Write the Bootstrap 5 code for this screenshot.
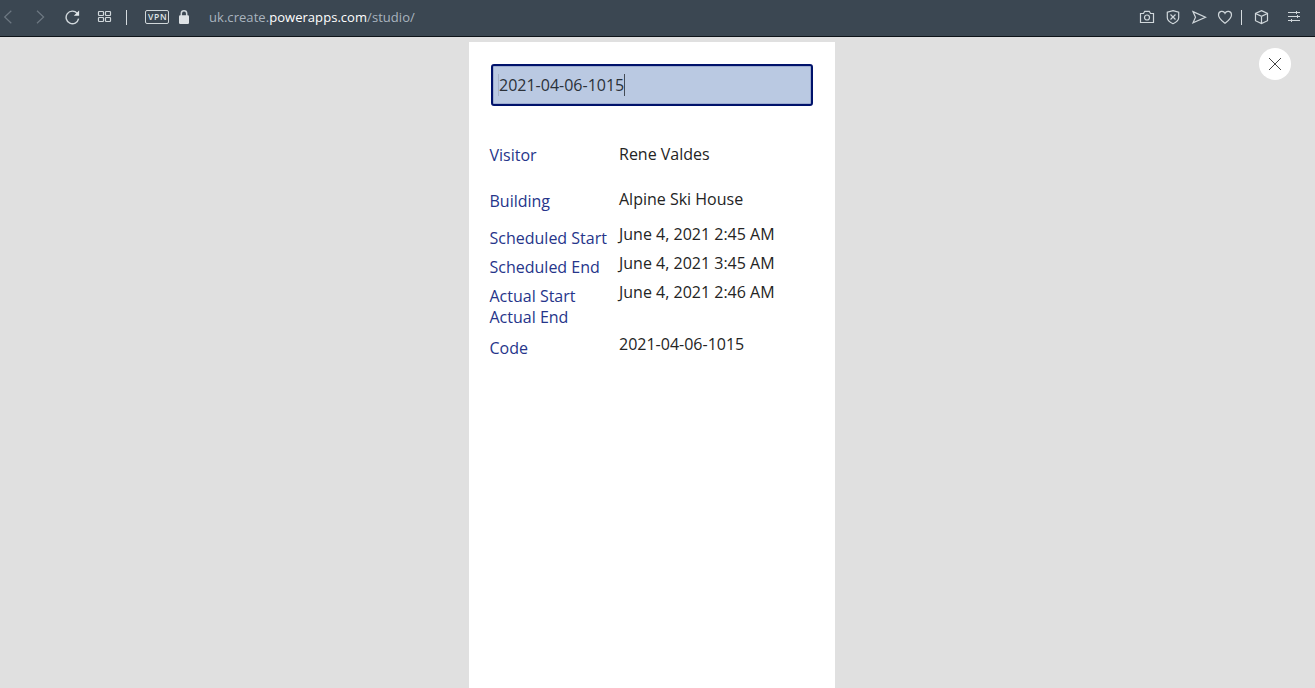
<!DOCTYPE html>
<html lang="en">
<head>
<meta charset="utf-8">
<meta name="viewport" content="width=device-width, initial-scale=1">
<title>Visitor check-in</title>
<link href="https://cdn.jsdelivr.net/npm/bootstrap@5.3.0/dist/css/bootstrap.min.css" rel="stylesheet">
<style>
body{height:100vh;background:#e0e0e0;font-family:"Open Sans","Noto Sans",sans-serif;font-size:16px;line-height:22px;color:#242424}
.browser-bar{height:37px;flex:none;background:#3b4752;border-bottom:1px solid #0e1419;padding-bottom:2px;color:#dfe4e7}
.browser-bar svg{fill:none;stroke:#d0d7db;stroke-width:1.2;flex:none;display:block}
.browser-bar .dim{stroke:#6d7882}
.sep{width:1px;height:15px;background:#d5dbdf}
.sep-nav{margin-left:14px}.sep-tools{margin-left:8px}
.vpn{width:24px;height:14px;border:1px solid #d0d7da;border-radius:2px;font-size:8.5px;line-height:12px;font-weight:600;letter-spacing:.8px;padding-left:2px;margin-left:18px}
.lock{margin-left:9px}
.tool{margin-left:10px}
.cube{margin-left:11px}
.tune{margin-left:17px;margin-right:13px}
.address{font-size:13px;line-height:18px;letter-spacing:.05px;color:#a9b4bf;margin-left:19px;white-space:nowrap}
.address b{font-weight:400;color:#fff}
.stage{padding-top:5px;padding-left:469px}
.phone{width:366px;background:#fff;padding:22px 22px 0}
.scan{width:322px;height:42px;border:2px solid #00126b;border-radius:3px;background:#bac9e2;padding:0 5px;box-shadow:inset 0 0 0 1px #9dacd0;color:#2b3139}
.scan .caret{width:1px;height:22px;background:#444b55}
.scan .edge{width:1px;height:22px;background:#a3b0c8}
.facts{margin:37px -2px 0 -1.5px}
.facts dt{width:129.5px;font-weight:400;color:#26358a;white-space:nowrap}
.facts dd{margin:0;white-space:nowrap}
.r1{height:45px}.r1 dt{padding-top:1px}
.r2{height:35px}.r2 dt{padding-top:2px}
.r3{height:29px}.r3 dt,.r5 dt,.r7 dt{padding-top:4px}
.r5{height:25px}.r6{height:27px}
.close-btn{width:32px;height:32px;background:#fff;margin:6px 24px 0 auto;border:0;padding:0}
</style>
<script src="https://cdn.jsdelivr.net/npm/bootstrap@5.3.0/dist/js/bootstrap.bundle.min.js"></script>
</head>
<body class="d-flex flex-column overflow-hidden">
<header class="browser-bar d-flex align-items-center">
  <svg class="dim" width="16" height="16" viewBox="0 0 16 16"><path d="M11.300 1.800 4.700 8l6.600 6.200"/></svg>
  <svg class="dim ms-3" width="16" height="16" viewBox="0 0 16 16"><path d="M5 1.800 11.600 8 5 14.200"/></svg>
  <svg class="ms-3" width="16" height="16" viewBox="0 0 16 16"><path stroke-width="1.400" d="M13.200 4.300A6.300 6.300 0 1 0 14.600 9.700"/><path d="M15.100 1.500v5.300H9.800z" fill="#e2e7ea" stroke="none"/></svg>
  <svg class="ms-3" width="16" height="16" viewBox="0 0 16 16"><rect x="2.500" y="2.500" width="5" height="4" rx=".7"/><rect x="9.500" y="2.500" width="5" height="4" rx=".7"/><rect x="2.500" y="8.500" width="5" height="4" rx=".7"/><rect x="9.500" y="8.500" width="5" height="4" rx=".7"/></svg>
  <span class="sep sep-nav"></span>
  <span class="vpn">VPN</span>
  <svg class="lock" width="12" height="16" viewBox="0 0 12 16"><path d="M3.300 7V4.400a2.700 2.700 0 0 1 5.400 0V7" stroke-width="1.500"/><rect x="1" y="6.300" width="10" height="8.600" rx="1.200" fill="#dde2e5" stroke="none"/></svg>
  <span class="address">uk.create.<b>powerapps.com</b>/studio/</span>
  <svg class="ms-auto" width="16" height="16" viewBox="0 0 16 16"><path d="M1.500 4.500h3l1.200-2.200h4.600l1.200 2.200h3v9h-13z"/><circle cx="8" cy="8.500" r="2.500"/></svg>
  <svg class="tool" width="16" height="16" viewBox="0 0 16 16"><path d="M8 1.600 13.700 3.300v5.400c0 3-2.500 4.500-5.700 6-3.200-1.500-5.700-3-5.700-6V3.300zM5.500 5.500l5 5M10.500 5.500l-5 5"/></svg>
  <svg class="tool" width="16" height="16" viewBox="0 0 16 16"><path d="M2 2.600 14.500 8.200 2 13.800 4.500 8.200z"/></svg>
  <svg class="tool" width="16" height="16" viewBox="0 0 16 16"><path d="M8 14.300C4.800 11.700 1.500 9.300 1.500 5.900c0-4 5-4.800 6.500-1.600 1.500-3.200 6.500-2.400 6.500 1.600 0 3.400-3.300 5.800-6.500 8.400z"/></svg>
  <span class="sep sep-tools"></span>
  <svg class="cube" width="16" height="16" viewBox="0 0 16 16"><path d="M8.500 1.600 14.500 4.500v7.200L8.500 14.500 2.500 11.700V4.500zM2.500 4.500l6 2.800 6-2.800M8.500 7.300v7.200"/></svg>
  <svg class="tune" width="16" height="16" viewBox="0 0 16 16"><path stroke-width="1" d="M2 3.500h12M2 7.500h12M2 11.500h12M10.500 2v3M11.500 6v3M5.500 10v3"/></svg>
</header>
<main class="stage d-flex flex-fill">
  <section class="phone">
    <div class="scan d-flex align-items-center"><span class="edge"></span><span>2021-04-06-1015</span><span class="caret"></span></div>
    <dl class="facts">
      <div class="d-flex r1"><dt>Visitor</dt><dd>Rene Valdes</dd></div>
      <div class="d-flex r2"><dt>Building</dt><dd>Alpine Ski House</dd></div>
      <div class="d-flex r3"><dt>Scheduled Start</dt><dd>June 4, 2021 2:45 AM</dd></div>
      <div class="d-flex r3"><dt>Scheduled End</dt><dd>June 4, 2021 3:45 AM</dd></div>
      <div class="d-flex r5"><dt>Actual Start</dt><dd>June 4, 2021 2:46 AM</dd></div>
      <div class="d-flex r6"><dt>Actual End</dt><dd></dd></div>
      <div class="d-flex r7"><dt>Code</dt><dd>2021-04-06-1015</dd></div>
    </dl>
  </section>
  <button class="close-btn rounded-circle d-flex align-items-center justify-content-center" aria-label="Close">
    <svg width="14" height="14" viewBox="0 0 14 14" fill="none" stroke="#444" stroke-width="1"><path d="M1 1l12 12M13 1 1 13"/></svg>
  </button>
</main>
</body>
</html>
